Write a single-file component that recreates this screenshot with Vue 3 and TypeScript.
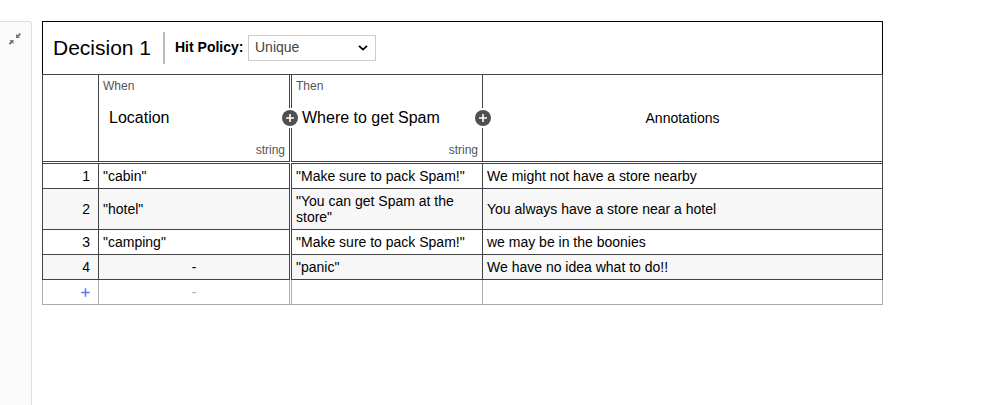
<script setup lang="ts">
import { ref } from 'vue'

interface Rule {
  id: number
  input: string
  output: string
  note: string
}

const policy = ref<string>('Unique')

const rules: Rule[] = [
  { id: 1, input: '"cabin"', output: '"Make sure to pack Spam!"', note: 'We might not have a store nearby' },
  { id: 2, input: '"hotel"', output: '"You can get Spam at the store"', note: 'You always have a store near a hotel' },
  { id: 3, input: '"camping"', output: '"Make sure to pack Spam!"', note: 'we may be in the boonies' },
  { id: 4, input: '-', output: '"panic"', note: 'We have no idea what to do!!' },
]
</script>

<template>
  <div class="page">
    <aside class="overview">
      <svg class="collapse" width="14" height="14" viewBox="0 0 14 14">
        <path d="M8 2v4h4L10.700 4.700L13 2.400L11.600 1L9.300 3.300Z" />
        <path d="M1.500 8h4v4L4.200 10.700L2.100 12.800L.7 11.400L2.800 9.300Z" />
      </svg>
    </aside>

    <main class="decision">
      <header class="head">
        <h1 class="name">Decision 1</h1>
        <div class="policy">
          <span class="policy-label">Hit Policy:</span>
          <div class="select">
            <span class="value">{{ policy }}</span>
            <svg width="10" height="6" viewBox="0 0 10 6">
              <path d="M1 .8L5 4.600L9 .8" />
            </svg>
          </div>
        </div>
      </header>

      <div class="row titles">
        <div class="cell index"></div>
        <div class="cell input">
          <span class="clause">When</span>
          <span class="title">Location</span>
          <span class="type">string</span>
          <button class="add" aria-label="Add input">
            <svg width="16" height="16" viewBox="0 0 16 16">
              <circle cx="8" cy="8" r="8" /><path d="M8 4v8M4 8h8" />
            </svg>
          </button>
        </div>
        <div class="cell output">
          <span class="clause">Then</span>
          <span class="title">Where to get Spam</span>
          <span class="type">string</span>
          <button class="add" aria-label="Add output">
            <svg width="16" height="16" viewBox="0 0 16 16">
              <circle cx="8" cy="8" r="8" /><path d="M8 4v8M4 8h8" />
            </svg>
          </button>
        </div>
        <div class="cell note">Annotations</div>
      </div>

      <div class="divider"></div>

      <div class="rules">
        <div v-for="rule in rules" :key="rule.id" class="row rule">
          <div class="cell index">{{ rule.id }}</div>
          <div class="cell input" :class="{ any: rule.input === '-' }">{{ rule.input }}</div>
          <div class="cell output">{{ rule.output }}</div>
          <div class="cell note">{{ rule.note }}</div>
        </div>
      </div>

      <div class="row rule new">
        <div class="cell index">
          <svg width="9" height="9" viewBox="0 0 9 9"><path d="M4.500 .3v8.400M.3 4.500h8.400" /></svg>
        </div>
        <div class="cell input any">-</div>
        <div class="cell output"></div>
        <div class="cell note"></div>
      </div>
    </main>
  </div>
</template>

<style>
body {
  background: #fff;
  overflow: hidden;
}
</style>

<style scoped>
.page {
  --line: #444;
  display: flex;
  align-items: flex-start;
  gap: 10px;
  height: 405px;
  padding-top: 21px;
  box-sizing: border-box;
  overflow: hidden;
  font-family: "Liberation Sans", Arial, sans-serif;
  font-size: 14px;
  line-height: 16px;
  color: #000;
}
.page * {
  box-sizing: border-box;
}
.overview {
  display: flex;
  justify-content: flex-end;
  width: 32px;
  height: 400px;
  padding: 10px 9px 0 0;
  border: 1px solid #ddd;
  border-left: 0;
  border-radius: 0 3px 0 0;
  background: #fafafa;
}
.collapse {
  fill: #777;
}
.decision {
  width: 841px;
}
.head {
  display: flex;
  align-items: center;
  height: 53px;
  border: 1px solid #000;
  border-bottom: 0;
  padding-left: 10px;
}
.name {
  margin: 0;
  width: 110px;
  font-size: 21px;
  line-height: 24px;
  font-weight: 400;
}
.policy {
  display: flex;
  align-items: center;
  height: 32px;
  padding-left: 10px;
  border-left: 2px solid #bbb;
}
.policy-label {
  width: 73px;
  padding-bottom: 2px;
  font-weight: 700;
}
.select {
  display: flex;
  align-items: center;
  justify-content: space-between;
  width: 128px;
  height: 26px;
  padding: 0 7px 0 6px;
  border: 1px solid #ccc;
  color: #444;
}
.value {
  padding-bottom: 2px;
}
.select path {
  fill: none;
  stroke: #000;
  stroke-width: 1.8;
}
.row {
  display: grid;
  grid-template-columns: 56px 193px 191px 401px;
}
.cell {
  border-left: 1px solid var(--line);
  border-bottom: 1px solid var(--line);
}
.cell.input {
  border-right: 1px solid var(--line);
  margin-right: 1px;
}
.cell.note {
  border-right: 1px solid var(--line);
}
.titles {
  height: 88px;
  border-top: 1px solid var(--line);
}
.titles .cell {
  position: relative;
  display: flex;
  flex-direction: column;
  justify-content: space-between;
  padding: 4px 4px;
}
.titles .note {
  align-items: center;
  justify-content: center;
}
.clause,
.type {
  font-size: 12px;
  line-height: 14px;
  color: #555;
}
.type {
  align-self: flex-end;
}
.title {
  padding-left: 6px;
  font-size: 16px;
  line-height: 18px;
}
.add {
  position: absolute;
  z-index: 1;
  top: 33px;
  right: -9px;
  width: 16px;
  height: 20px;
  padding: 2px 0;
  border: 0;
  background: #fff;
}
.add svg {
  display: block;
}
.add circle {
  fill: #505050;
}
.add path {
  stroke: #fff;
  stroke-width: 1.6;
}
.divider {
  height: 1px;
  border: solid var(--line);
  border-width: 0 1px;
}
.rule {
  min-height: 25px;
}
.rules .rule:first-child .cell {
  border-top: 1px solid var(--line);
}
.rule:nth-child(even) .cell {
  background: #f7f7f7;
}
.rule .cell {
  display: flex;
  align-items: center;
  padding: 4px;
}
.rule .index {
  justify-content: flex-end;
  padding-right: 8px;
}
.rule .any {
  justify-content: center;
}
.page .rule.new .cell {
  --line: #aaa;
  border-bottom: 0;
  background: #fff;
  color: #aaa;
}
.rule.new {
  border-bottom: 1px solid #aaa;
}
.new svg path {
  stroke: #5577f7;
  stroke-width: 1.5;
}
</style>
